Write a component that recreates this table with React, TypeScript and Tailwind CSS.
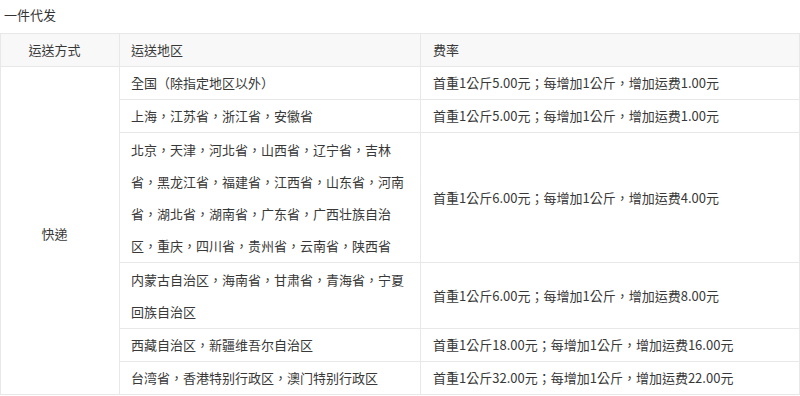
const regions = [
  { area: "全国（除指定地区以外）", rate: "首重1公斤5.00元；每增加1公斤，增加运费1.00元", multi: false },
  { area: "上海，江苏省，浙江省，安徽省", rate: "首重1公斤5.00元；每增加1公斤，增加运费1.00元", multi: false },
  {
    area: "北京，天津，河北省，山西省，辽宁省，吉林省，黑龙江省，福建省，江西省，山东省，河南省，湖北省，湖南省，广东省，广西壮族自治区，重庆，四川省，贵州省，云南省，陕西省",
    rate: "首重1公斤6.00元；每增加1公斤，增加运费4.00元",
    multi: true,
  },
  {
    area: "内蒙古自治区，海南省，甘肃省，青海省，宁夏回族自治区",
    rate: "首重1公斤6.00元；每增加1公斤，增加运费8.00元",
    multi: true,
  },
  { area: "西藏自治区，新疆维吾尔自治区", rate: "首重1公斤18.00元；每增加1公斤，增加运费16.00元", multi: false },
  { area: "台湾省，香港特别行政区，澳门特别行政区", rate: "首重1公斤32.00元；每增加1公斤，增加运费22.00元", multi: false },
]

export default function App() {
  return (
    <div className="w-[800px] h-[396px] overflow-hidden bg-white font-['Noto_Sans_CJK_TC','Noto_Sans_CJK_SC',sans-serif] text-[13px] text-[#383838]">
      {/* Title */}
      <div className="h-[33px] pl-[4px] leading-[30px] text-[#333]">一件代发</div>

      <table className="w-full table-fixed border-collapse">
        <colgroup>
          <col className="w-[119px]" />
          <col className="w-[301px]" />
          <col />
        </colgroup>
        <thead>
          <tr className="bg-[#f8f8f8]">
            <th className="border border-[#e8e8e8] p-0 pr-[11px] text-center font-normal leading-[32px]">运送方式</th>
            <th className="border border-[#e8e8e8] p-0 px-[11px] text-left font-normal leading-[32px]">运送地区</th>
            <th className="border border-[#e8e8e8] p-0 px-[12px] text-left font-normal leading-[32px]">费率</th>
          </tr>
        </thead>
        <tbody>
          {regions.map((item, index) => (
            <tr key={index}>
              {index === 0 && (
                <td rowSpan={regions.length} className="border border-[#e8e8e8] p-0 pr-[11px] pt-[6px] text-center align-middle">
                  快递
                </td>
              )}
              <td className={`border border-[#e8e8e8] px-[11px] leading-[32px] ${item.multi ? "py-[0.5px]" : "py-0"}`}>
                {item.area}
              </td>
              <td className="border border-[#e8e8e8] p-0 px-[12px] align-middle leading-[32px]">{item.rate}</td>
            </tr>
          ))}
        </tbody>
      </table>
    </div>
  )
}
